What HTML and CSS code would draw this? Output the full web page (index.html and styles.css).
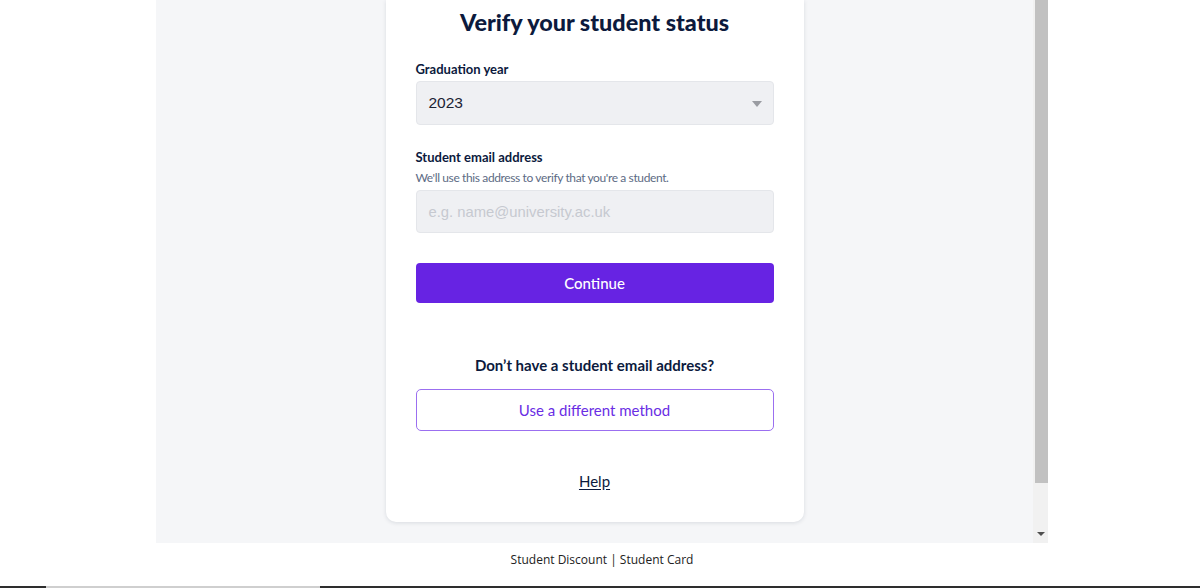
FILE: index.html
```html
<!DOCTYPE html>
<html>
<head>
<meta charset="utf-8">
<link rel="stylesheet" href="styles.css">
</head>
<body>
<div class="page">
  <div class="panel">
    <div class="content">
      <div class="card">
        <h1 class="title">Verify your student status</h1>
        <label class="label first">Graduation year</label>
        <div class="field select">
          <span class="value">2023</span>
          <span class="caret"></span>
        </div>
        <label class="label second">Student email address</label>
        <p class="hint">We'll use this address to verify that you're a student.</p>
        <div class="field input"><span class="placeholder">e.g. name@university.ac.uk</span></div>
        <button class="btn-primary">Continue</button>
        <p class="alt-q">Don’t have a student email address?</p>
        <button class="btn-outline">Use a different method</button>
        <a class="help" href="#">Help</a>
      </div>
    </div>
    <div class="scrollbar">
      <div class="thumb"></div>
      <div class="arrow"></div>
    </div>
  </div>
  <div class="footer">Student Discount | Student Card</div>
</div>
<div class="bottom-line">
  <span class="seg dark s1"></span><span class="seg light s2"></span><span class="seg dark s3"></span>
</div>
</body>
</html>
```

FILE: styles.css
```css
* { box-sizing: border-box; }
html, body { margin: 0; padding: 0; background: #ffffff; }
body { width: 1200px; height: 588px; overflow: hidden; font-family: Lato, "Open Sans", sans-serif; }

.page { width: 892px; margin-left: 156px; }

.panel { display: flex; height: 543px; background: #f5f6f8; }
.content { flex: 1; display: flex; justify-content: center; align-items: flex-start; }

.card {
  width: 418px;
  background: #ffffff;
  border-radius: 0 0 10px 10px;
  box-shadow: 0 1px 4px rgba(20, 30, 60, 0.12);
  padding: 8px 30px 31px;
  display: flex;
  flex-direction: column;
}

.title {
  margin: 0;
  font-size: 23.4px;
  line-height: 28px;
  font-weight: 900;
  color: #0c1a3d;
  text-align: center;
}

.label {
  font-size: 13px;
  line-height: 16px;
  font-weight: 700;
  color: #0c1a3d;
}
.label.first { margin-top: 25px; }
.label.second { margin-top: 24px; }

.field {
  background: #eff0f3;
  border: 1px solid #e4e6ea;
  border-radius: 4px;
  display: flex;
  align-items: center;
  padding: 0 11px;
  font-family: "Liberation Sans", Arial, sans-serif;
  font-size: 15.5px;
}
.select { height: 44px; margin-top: 4px; justify-content: space-between; }
.value { color: #1c2333; padding-left: 1px; }
.caret {
  width: 0; height: 0;
  border-left: 5.5px solid transparent;
  border-right: 5.5px solid transparent;
  border-top: 6px solid #9a9ca2;
  margin-top: 2px;
}

.hint {
  margin: 5px 0 0;
  font-size: 12px;
  line-height: 16px;
  color: #5d6b84;
  letter-spacing: -0.38px;
}
.input { height: 43px; margin-top: 4px; font-size: 14.8px; }
.placeholder { color: #c6c9d0; padding-left: 1px; }

.btn-primary {
  margin-top: 30px;
  height: 40px;
  border: none;
  border-radius: 4px;
  background: #6723e3;
  color: #ffffff;
  font-family: Lato, sans-serif;
  font-size: 15px;
  font-weight: 500;
  cursor: pointer;
}

.alt-q {
  margin: 52px 0 0;
  text-align: center;
  font-size: 15px;
  line-height: 20px;
  font-weight: 700;
  color: #0c1a3d;
}

.btn-outline {
  margin-top: 14px;
  height: 42px;
  border: 1px solid #9b6ff0;
  border-radius: 5px;
  background: #ffffff;
  color: #6a2de4;
  font-family: Lato, sans-serif;
  font-size: 15px;
  cursor: pointer;
}

.help {
  margin-top: 40px;
  align-self: center;
  font-size: 15px;
  line-height: 20px;
  color: #0c1a3d;
  text-decoration: underline;
  text-underline-offset: 2px;
}

.scrollbar {
  width: 15px;
  background: #f1f1f1;
  display: flex;
  flex-direction: column;
  align-items: center;
  padding-left: 1px;
}
.thumb { width: 13px; height: 483px; background: #c1c1c1; }
.arrow {
  margin-top: 49px;
  width: 0; height: 0;
  border-left: 4px solid transparent;
  border-right: 4px solid transparent;
  border-top: 4px solid #505050;
}

.footer {
  height: 43px;
  padding-top: 9px;
  text-align: center;
  font-family: "Open Sans", sans-serif;
  font-size: 12px;
  line-height: 16px;
  color: #222222;
}

.bottom-line { display: flex; height: 2px; }
.seg { display: block; height: 2px; }
.dark { background: #2e2e2e; }
.light { background: #cfcfcf; }
.s1 { width: 46px; }
.s2 { width: 274px; }
.s3 { flex: 1; }
```
